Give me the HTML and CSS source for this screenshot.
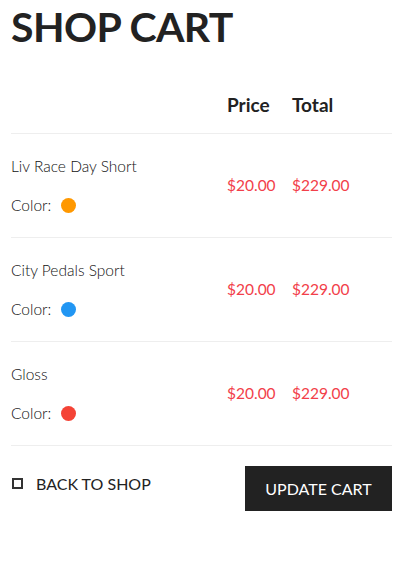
FILE: index.html
```html
<!DOCTYPE html>
<html>
<head>
<meta charset="utf-8">
<link rel="stylesheet" href="styles.css">
</head>
<body>
<div class="page">
  <h1 class="title">SHOP CART</h1>
  <div class="cart">
    <div class="cart-head">
      <div class="col-product"></div>
      <div class="col-price">Price</div>
      <div class="col-total">Total</div>
    </div>
    <div class="cart-row">
      <div class="col-product">
        <div class="name">Liv Race Day Short</div>
        <div class="color">Color: <span class="dot dot-orange"></span></div>
      </div>
      <div class="col-price money">$20.00</div>
      <div class="col-total money">$229.00</div>
    </div>
    <div class="cart-row">
      <div class="col-product">
        <div class="name">City Pedals Sport</div>
        <div class="color">Color: <span class="dot dot-blue"></span></div>
      </div>
      <div class="col-price money">$20.00</div>
      <div class="col-total money">$229.00</div>
    </div>
    <div class="cart-row">
      <div class="col-product">
        <div class="name">Gloss</div>
        <div class="color">Color: <span class="dot dot-red"></span></div>
      </div>
      <div class="col-price money">$20.00</div>
      <div class="col-total money">$229.00</div>
    </div>
  </div>
  <div class="actions">
    <a class="back" href="#"><span class="box"></span>BACK TO SHOP</a>
    <button class="update">UPDATE CART</button>
  </div>
</div>
</body>
</html>
```

FILE: styles.css
```css
* { box-sizing: border-box; }
body {
  margin: 0;
  background: #fff;
  font-family: Lato, "Open Sans", sans-serif;
  color: #222;
}
.page {
  padding: 0 12px 0 11px;
}
.title {
  margin: 2px 0 0;
  font-size: 41px;
  font-weight: 700;
  letter-spacing: -0.6px;
  line-height: 50px;
  color: #222;
}
.cart-head {
  display: flex;
  align-items: flex-end;
  margin-top: 41px;
  padding-bottom: 16px;
  border-bottom: 1px solid #eee;
  font-size: 19px;
  font-weight: 700;
  line-height: 24px;
  color: #222;
}
.col-product { flex: 1; }
.col-price { width: 65px; }
.col-total { width: 100px; }
.cart-row {
  display: flex;
  align-items: center;
  padding: 20px 0 20px;
  border-bottom: 1px solid #eee;
}
.money { margin-top: -2px; }
.name, .color {
  font-size: 15.5px;
  font-weight: 300;
  line-height: 24px;
  color: #111;
}
.color {
  display: flex;
  align-items: center;
  margin-top: 15px;
}
.dot {
  display: inline-block;
  width: 15px;
  height: 15px;
  border-radius: 50%;
  margin-left: 10px;
}
.dot-orange { background: #ff9800; }
.dot-blue { background: #2196f3; }
.dot-red { background: #f44336; }
.money {
  font-size: 15.5px;
  line-height: 24px;
  color: #f2404a;
}
.actions {
  display: flex;
  justify-content: space-between;
  align-items: center;
  padding-top: 20px;
}
.back {
  display: flex;
  align-items: center;
  margin-top: -10px;
  font-size: 16px;
  color: #222;
  text-decoration: none;
}
.box {
  width: 11px;
  height: 11px;
  border: 2px solid #333;
  margin: 0 13px 0 1px;
}
.update {
  width: 147px;
  height: 45px;
  border: 0;
  background: #222;
  color: #fff;
  font-family: Lato, sans-serif;
  font-size: 16px;
  padding: 0;
}
```
